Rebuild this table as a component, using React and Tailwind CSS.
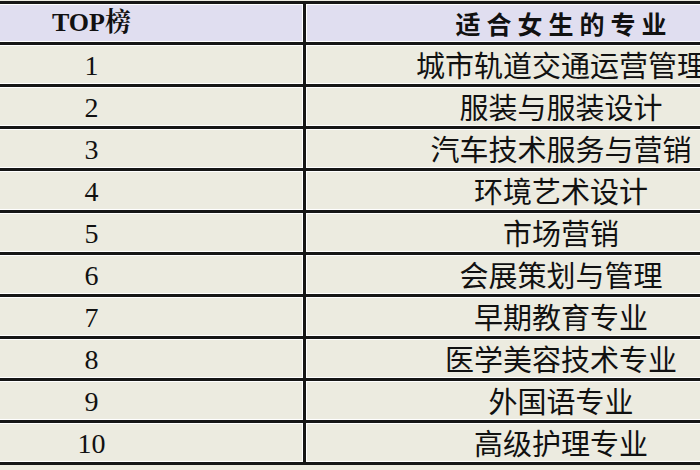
import React from 'react';

const rows = [
    '城市轨道交通运营管理',
    '服装与服装设计',
    '汽车技术服务与营销',
    '环境艺术设计',
    '市场营销',
    '会展策划与管理',
    '早期教育专业',
    '医学美容技术专业',
    '外国语专业',
    '高级护理专业',
];

const serif = { fontFamily: '"Liberation Serif", "Noto Serif CJK SC", "Noto Sans CJK SC", serif' };

// one table row: rank cell + major cell
const Row = ({ rank, major, header }) => (
    <div className={`flex border-b-[3px] border-[#161616] ${header ? 'h-[41px]' : 'h-[42px]'}`}>
        <div
            className={`w-[423px] shrink-0 flex items-center justify-center shadow-[inset_0_0_0_1px_#ffffff] leading-none text-[#111] ${header ? 'bg-[#e0def0] font-bold text-[26px]' : 'bg-[#ecebe0] text-[28px] pt-[2px]'}`}
            style={serif}
        >
            {rank}
        </div>
        <div className="w-[3px] shrink-0 bg-[#161616]" />
        <div
            className={`w-[510px] shrink-0 flex items-center justify-center shadow-[inset_0_0_0_1px_#ffffff] text-[#111] leading-none font-['Noto_Sans_CJK_SC',sans-serif] ${header ? 'bg-[#e0def0] font-bold text-[25px] tracking-[6px] pl-[6px]' : 'bg-[#ecebe0] text-[29px]'}`}
        >
            {major}
        </div>
    </div>
);

export default function App() {
    return (
        <div className="w-[700px] h-[470px] overflow-hidden bg-[#ecebe0] pt-[1px]">
            <div className="ml-[-120px] w-[936px] border-t-[3px] border-[#161616]">
                <Row rank="TOP榜" major="适合女生的专业" header />
                {rows.map((m, i) => (
                    <Row key={i} rank={i + 1} major={m} />
                ))}
            </div>
        </div>
    );
}
